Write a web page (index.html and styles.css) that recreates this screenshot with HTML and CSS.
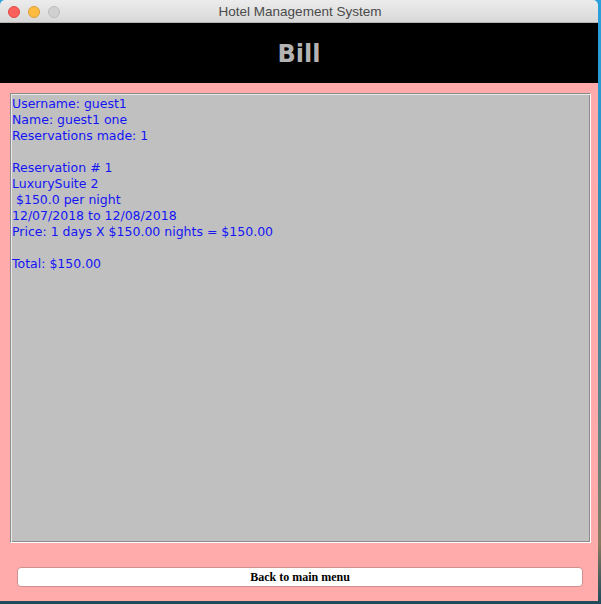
FILE: index.html
```html
<!DOCTYPE html>
<html>
<head>
<meta charset="utf-8">
<title>Hotel Management System</title>
<link rel="stylesheet" href="styles.css">
</head>
<body>
<div class="window">
  <div class="titlebar">
    <div class="lights">
      <span class="light red"></span>
      <span class="light yellow"></span>
      <span class="light gray"></span>
    </div>
    <div class="title">Hotel Management System</div>
  </div>
  <div class="header">Bill</div>
  <div class="content">
    <div class="bill">
      <div class="bill-text">Username: guest1
Name: guest1 one
Reservations made: 1

Reservation # 1
LuxurySuite 2
 $150.0 per night
12/07/2018 to 12/08/2018
Price: 1 days X $150.00 nights = $150.00

Total: $150.00</div>
    </div>
    <button class="back">Back to main menu</button>
  </div>
</div>
</body>
</html>
```
FILE: styles.css
```css
html, body {
  margin: 0;
  padding: 0;
}
body {
  width: 601px;
  height: 604px;
  overflow: hidden;
  background: linear-gradient(180deg, #2aa0dc 0%, #2a8fc0 40%, #8a7a60 90%, #1b4a5c 100%);
}
.window {
  width: 598px;
  height: 601px;
  display: flex;
  flex-direction: column;
  border-radius: 5px 5px 0 0;
  overflow: hidden;
}
.titlebar {
  position: relative;
  height: 22px;
  border-bottom: 1px solid #b4b4b4;
  background: linear-gradient(180deg, #ececec 0%, #d8d8d8 100%);
  display: flex;
  align-items: center;
  justify-content: center;
}
.lights {
  position: absolute;
  left: 8px;
  top: 6px;
  display: flex;
  gap: 8px;
}
.light {
  width: 12px;
  height: 12px;
  border-radius: 50%;
  box-sizing: border-box;
}
.red { background: #fc605c; border: 1px solid #de4c46; }
.yellow { background: #fdbc40; border: 1px solid #de9f34; }
.gray { background: #d0d0d0; border: 1px solid #bdbdbd; }
.title {
  font-family: "Liberation Sans", Arial, sans-serif;
  font-size: 13.5px;
  color: #4a4a4a;
  margin-left: 2px;
}
.header {
  height: 60px;
  background: #000;
  color: #b3b3b3;
  font-family: "DejaVu Sans", sans-serif;
  font-weight: bold;
  font-size: 24px;
  display: flex;
  align-items: center;
  justify-content: center;
  padding-top: 1px;
  box-sizing: border-box;
}
.content {
  flex: 1;
  background: #ffabab;
  padding: 10px 7px 0 10px;
  display: flex;
  flex-direction: column;
}
.bill {
  height: 450px;
  box-sizing: border-box;
  border: 1px solid;
  border-color: #8c8c8c #ffffff #ffffff #8c8c8c;
  box-shadow: inset 1px 1px 0 #e8e8e8, inset -1px -1px 0 #8c8c8c;
  background: #c0c0c0;
  padding: 2px 1px;
}
.bill-text {
  white-space: pre;
  font-family: "DejaVu Sans", sans-serif;
  font-size: 12.5px;
  line-height: 16px;
  color: #1414f5;
}
.back {
  margin: 24px 0 0 7px;
  width: 566px;
  height: 20px;
  background: #fff;
  border: 1px solid #cf8f8f;
  border-radius: 4px;
  font-family: "Liberation Serif", "Times New Roman", serif;
  font-weight: bold;
  font-size: 12px;
  color: #000;
  padding: 0;
}
```
